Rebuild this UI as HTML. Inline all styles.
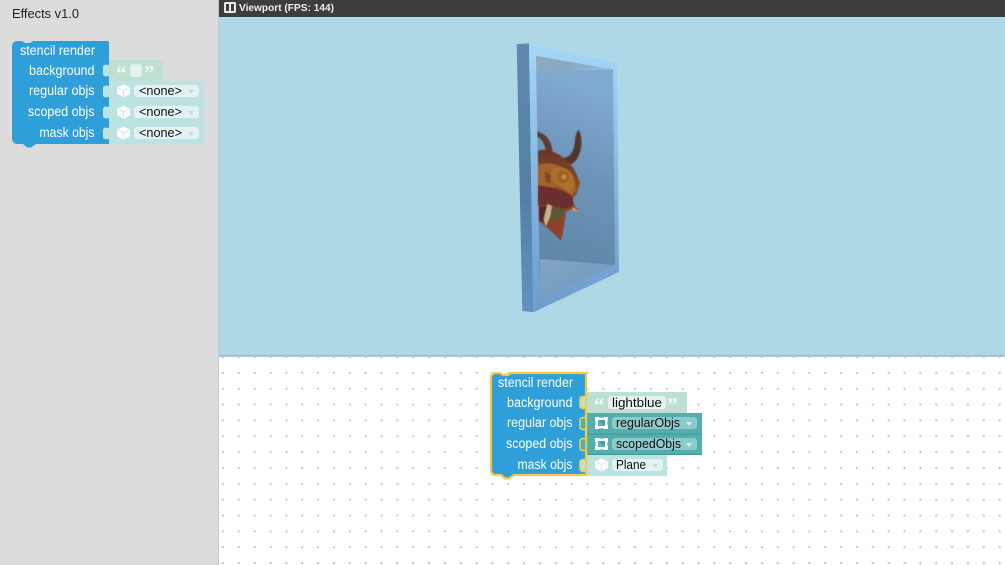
<!DOCTYPE html>
<html>
<head>
<meta charset="utf-8">
<style>
html,body{margin:0;padding:0;width:1005px;height:565px;overflow:hidden;background:#dcdcdc}
#s{position:absolute;left:0;top:0}
text{font-family:"Liberation Sans",sans-serif}
</style>
</head>
<body>
<svg id="s" width="1005" height="565" viewBox="0 0 1005 565" xmlns="http://www.w3.org/2000/svg">
<defs>
<filter id="soft" x="0" y="0" width="100%" height="100%"><feGaussianBlur stdDeviation="0.35"/></filter>
<filter id="soft2" x="-5%" y="-5%" width="110%" height="110%"><feGaussianBlur stdDeviation="0.6"/></filter>
<pattern id="dots" x="215" y="356" width="15.85" height="15.85" patternUnits="userSpaceOnUse">
<rect x="7" y="0" width="2" height="2" fill="#c6c6c6"/>
</pattern>
<linearGradient id="back" gradientUnits="userSpaceOnUse" x1="545" y1="265" x2="612" y2="100"><stop offset="0" stop-color="#5f86a6"/><stop offset="0.55" stop-color="#6c94b8"/><stop offset="1" stop-color="#80a9d0"/></linearGradient>
<linearGradient id="ceil" x1="0" y1="0" x2="1" y2="0.2"><stop offset="0" stop-color="#8fabc2"/><stop offset="0.5" stop-color="#86a8c4"/><stop offset="1" stop-color="#92bbdc"/></linearGradient>
<linearGradient id="floor" x1="0" y1="0" x2="1" y2="1"><stop offset="0" stop-color="#84a6c2"/><stop offset="1" stop-color="#6a96be"/></linearGradient>
<linearGradient id="front" x1="0" y1="0" x2="0" y2="1"><stop offset="0" stop-color="#a4d8f8"/><stop offset="0.5" stop-color="#86b6e0"/><stop offset="1" stop-color="#6b9dce"/></linearGradient>
<linearGradient id="sideg" x1="0" y1="0" x2="0" y2="1"><stop offset="0" stop-color="#5f8aae"/><stop offset="0.55" stop-color="#547fa6"/><stop offset="1" stop-color="#5f92c2"/></linearGradient>
<linearGradient id="skull" x1="0" y1="0" x2="0" y2="1"><stop offset="0" stop-color="#6b3526"/><stop offset="0.4" stop-color="#8a4a28"/><stop offset="1" stop-color="#8a3f2a"/></linearGradient>
</defs>

<g filter="url(#soft)">
<rect x="0" y="0" width="219" height="565" fill="#dcdcdc"/>
<rect x="218" y="0" width="1" height="565" fill="#c8c8c8"/>
<text x="12" y="18" font-size="12.5" fill="#222" textLength="67" lengthAdjust="spacingAndGlyphs">Effects v1.0</text>

<rect x="219" y="0" width="786" height="17" fill="#3c3c3c"/>
<rect x="224" y="2" width="12" height="11" rx="1.5" fill="#eaeaea"/>
<rect x="226" y="4" width="3" height="7" fill="#3c3c3c"/>
<rect x="231" y="4" width="3" height="7" fill="#3c3c3c"/>
<text x="239" y="11" font-size="10" font-weight="bold" fill="#eeeeee" textLength="95" lengthAdjust="spacingAndGlyphs">Viewport (FPS: 144)</text>

<rect x="219" y="17" width="786" height="339" fill="#aed8e6"/>
<rect x="219" y="355" width="786" height="1.5" fill="#9cbccb"/>
</g>

<!-- frame -->
<g filter="url(#soft)">
<polygon points="516.7,44.3 529,43.3 533.3,312.3 522.3,311" fill="url(#sideg)"/>
<polygon points="529,43.3 617,63 619,272 533.3,312.3" fill="url(#front)"/>
<polygon points="536,56 613,69.5 615,265 540,299" fill="url(#back)"/>
<polygon points="536,56 613,69.5 536.7,72.3" fill="url(#ceil)"/>
<polygon points="540,259 615,265 540,299" fill="url(#floor)"/>
</g>

<!-- mask -->
<g filter="url(#soft2)">
<path d="M537.5,131.5 C546,134 552,141 552.5,152 L551.5,165 L545.5,158 C547,149 544,141 537.5,136.5Z" fill="#5b3a30"/>
<path d="M578.5,130 C582,134 583,148 578,157 C575,163 570,166 565,165 L562,158 C569,158 573,153 574.5,145 C575,139 576,132 578.5,130Z" fill="#55352c"/>
<path d="M538,151 C545,148 553,151 561,156 C570,162 576,170 580,183 L577,193 L573,198 L573,204 L579.5,212 L571,209 L566,212 L564,226 L561,240.5 L553,233 L539,221Z" fill="url(#skull)"/>
<path d="M538,165 C552,160 566,167 574,178 L576,190 L572,196 C566,190 560,186 548,187 L538,185Z" fill="#a3632b"/>
<path d="M552,169 C562,163 575,171 575,185 L570,194 C564,187 553,184 551,177Z" fill="#ad6f2c"/>
<circle cx="563" cy="177" r="6" fill="#9c5e28"/>
<circle cx="564" cy="177" r="2.4" fill="#c0904f"/>
<path d="M545,171 L551,175 L550,184 L545,181Z" fill="#7f4a24"/>
<path d="M538,185 C548,187 560,188 572,196 L574,205 L565,209 L548,205 L538,206Z" fill="#6d2f2d"/>
<path d="M548,204 L552,206 L550,217 L546,226 C543,221 543,210 548,204Z" fill="#c2b48e"/>
<path d="M552,207 L565,209 L562,219 L551,221Z" fill="#5e5732"/>
<path d="M539,207 L547,206 L543,222 L539,221Z" fill="#5e2324"/>
<path d="M552,221 L562,219 L561,240 L553,233 L546,227Z" fill="#8f3f2c"/>
<path d="M573,207 L579.5,212 L572,210Z" fill="#c9a860"/>
</g>

<g filter="url(#soft)">
<rect x="219" y="357" width="786" height="208" fill="#ffffff"/>
<rect x="219" y="356" width="786" height="209" fill="url(#dots)"/>

<!-- palette block -->
<path d="M109,60 H163 V81 H109 Z" fill="#bde0d0"/>
<path d="M109,81 H204 V144 H109 Z" fill="#bce2e1"/>
<path d="M18,41 H22 L25,43 H30 L33,41 H107 Q109,41 109,43 V144 H36 L31,147.5 H27 L23,144 H18 Q12,144 12,138 V47 Q12,41 18,41Z" fill="#2e9fd8"/>
<path d="M109,65 C105,64 103,65 103,67 V74 C103,76 105,77 109,76Z M109,86 C105,85 103,86 103,88 V95 C103,97 105,98 109,97Z M109,107 C105,106 103,107 103,109 V116 C103,118 105,119 109,118Z M109,128 C105,127 103,128 103,130 V137 C103,139 105,140 109,139Z" fill="#bce2e1"/>
<g fill="#fff" font-size="13.5">
<text x="20" y="55" textLength="75" lengthAdjust="spacingAndGlyphs">stencil render</text>
<text x="29" y="75" textLength="65.5" lengthAdjust="spacingAndGlyphs">background</text>
<text x="29" y="95" textLength="65.5" lengthAdjust="spacingAndGlyphs">regular objs</text>
<text x="28" y="116" textLength="66.5" lengthAdjust="spacingAndGlyphs">scoped objs</text>
<text x="39.5" y="137" textLength="55" lengthAdjust="spacingAndGlyphs">mask objs</text>
</g>
<text x="116" y="80" font-size="21" font-weight="bold" fill="#fff" opacity=".85" style="font-family:'Liberation Serif',serif">“</text>
<text x="144" y="80" font-size="21" font-weight="bold" fill="#fff" opacity=".85" style="font-family:'Liberation Serif',serif">”</text>
<rect x="130" y="64" width="12" height="13" rx="3" fill="#e4f3ec"/>
<g id="cube1">
<path d="M123.5,84.5 L130,87.5 V94 L123.5,97.3 L117,94 V87.5Z" fill="#fff"/>
<path d="M118.5,88.2 L123.5,90.5 L128.5,88.2 M123.5,90.5 V96" fill="none" stroke="#cfeaea" stroke-width="1"/>
</g>
<use href="#cube1" y="21.3"/>
<use href="#cube1" y="42.3"/>
<g fill="#e3f3f3">
<rect x="134" y="85" width="65" height="12" rx="3"/>
<rect x="134" y="106" width="65" height="12" rx="3"/>
<rect x="134" y="127" width="65" height="12" rx="3"/>
</g>
<g fill="#111" font-size="12.5">
<text x="139" y="95" textLength="43" lengthAdjust="spacingAndGlyphs">&lt;none&gt;</text>
<text x="139" y="116" textLength="43" lengthAdjust="spacingAndGlyphs">&lt;none&gt;</text>
<text x="139" y="137" textLength="43" lengthAdjust="spacingAndGlyphs">&lt;none&gt;</text>
</g>
<g fill="#c3dede">
<path d="M188,90 h6 l-3,4z"/>
<path d="M188,111 h6 l-3,4z"/>
<path d="M188,132 h6 l-3,4z"/>
</g>

<!-- workspace block -->
<path d="M587,392 H687 V413 H587 Z" fill="#bde0d0"/>
<path d="M587,413 H702 V434 H587Z" fill="#52aeae"/>
<path d="M587,434 H702 V455 H587Z" fill="#52aeae"/>
<rect x="587" y="433.5" width="115" height="1" fill="#3f9797"/>
<rect x="587" y="454" width="115" height="1" fill="#3f9797"/>
<path d="M587,455 H667 V476 H587 Z" fill="#bce2e1"/>
<path d="M496,373 H500 L503,375 H508 L511,373 H585 Q586,373 586,375 V475 H514 L509,478.5 H505 L501,475 H496 Q491,475 491,470 V378 Q491,373 496,373Z" fill="#2e9fd8" stroke="#f8c845" stroke-width="2.2"/>
<path d="M586,397 C582,396 580,397 580,399 V406 C580,408 582,409 586,408Z" fill="#bde0d0" stroke="#f8c845" stroke-width="1.6"/>
<path d="M586,418 C582,417 580,418 580,420 V427 C580,429 582,430 586,429Z" fill="#52aeae" stroke="#f8c845" stroke-width="1.6"/>
<path d="M586,439 C582,438 580,439 580,441 V448 C580,450 582,451 586,450Z" fill="#52aeae" stroke="#f8c845" stroke-width="1.6"/>
<path d="M586,460 C582,459 580,460 580,462 V469 C580,471 582,472 586,471Z" fill="#bce2e1" stroke="#f8c845" stroke-width="1.6"/>
<g fill="#fff" font-size="13.5">
<text x="498" y="387" textLength="75" lengthAdjust="spacingAndGlyphs">stencil render</text>
<text x="507" y="407" textLength="65.5" lengthAdjust="spacingAndGlyphs">background</text>
<text x="507" y="427" textLength="65.5" lengthAdjust="spacingAndGlyphs">regular objs</text>
<text x="506" y="448" textLength="66.5" lengthAdjust="spacingAndGlyphs">scoped objs</text>
<text x="517.5" y="469" textLength="55" lengthAdjust="spacingAndGlyphs">mask objs</text>
</g>
<text x="594" y="412" font-size="21" font-weight="bold" fill="#fff" opacity=".85" style="font-family:'Liberation Serif',serif">“</text>
<text x="667" y="412" font-size="21" font-weight="bold" fill="#fff" opacity=".85" style="font-family:'Liberation Serif',serif">”</text>
<rect x="608" y="396" width="58" height="13" rx="3" fill="#e6f4ee"/>
<text x="612" y="407" font-size="12.5" fill="#111" textLength="50" lengthAdjust="spacingAndGlyphs">lightblue</text>

<g id="sq1">
<path d="M595,417 H608 V429 H595Z M598,420 V426 H605 V420Z" fill="#fff" fill-rule="evenodd"/>
<rect x="598" y="420" width="7" height="6" fill="#5fb5b5"/>
<path d="M598,420 H605 V426Z" fill="#46a0a0"/>
<path d="M599,417 H604 V418 H599Z M599,428 H604 V429 H599Z M595,421 V425 H596 V421Z M607,421 V425 H608 V421Z" fill="#52aeae" opacity=".6"/>
</g>
<use href="#sq1" y="21"/>
<rect x="612" y="417" width="85" height="12" rx="3" fill="#8fcaca"/>
<rect x="612" y="438" width="85" height="12" rx="3" fill="#8fcaca"/>
<rect x="612" y="459" width="51" height="12" rx="3" fill="#e3f3f3"/>
<text x="616" y="427" font-size="12.5" fill="#111" textLength="64" lengthAdjust="spacingAndGlyphs">regularObjs</text>
<text x="616" y="448" font-size="12.5" fill="#111" textLength="65" lengthAdjust="spacingAndGlyphs">scopedObjs</text>
<text x="616" y="469" font-size="12.5" fill="#111" textLength="30" lengthAdjust="spacingAndGlyphs">Plane</text>
<path d="M686,422 h6 l-3,4z" fill="#d7eeee"/>
<path d="M686,443 h6 l-3,4z" fill="#d7eeee"/>
<path d="M652,464 h6 l-3,4z" fill="#c3dede"/>
<use href="#cube1" x="478" y="374"/>
</g>
</svg>
</body>
</html>
